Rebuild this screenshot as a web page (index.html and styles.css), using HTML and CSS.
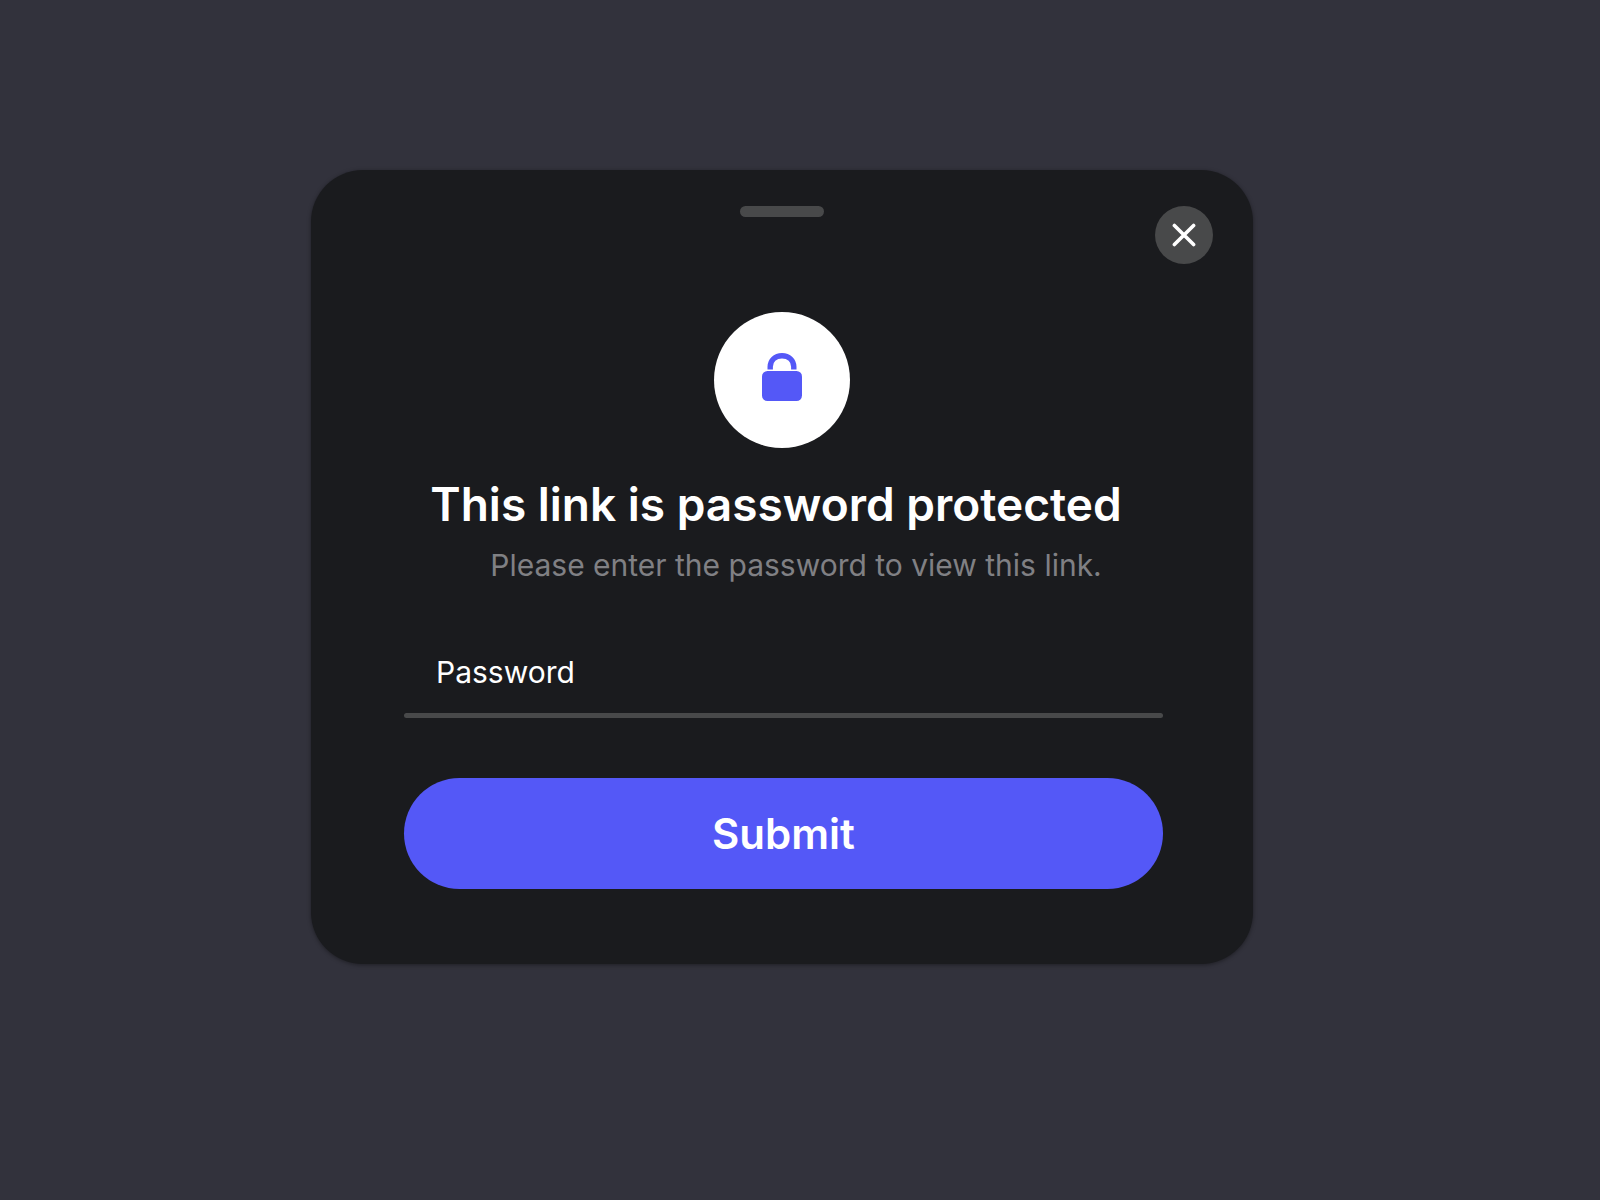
FILE: index.html
```
<!DOCTYPE html>
<html lang="en">
<head>
  <meta charset="UTF-8" />
  <meta name="viewport" content="width=device-width, initial-scale=1.0" />
  <title>Password protected link</title>
  <link rel="stylesheet" href="styles.css">
</head>
<body>
  <main class="modal">
    <div class="modal-top">
      <span class="handle"></span>
      <button type="button" class="close" aria-label="Close">
        <svg width="24" height="24" viewBox="0 0 24 24" fill="none" stroke="#fff" stroke-width="3.6" stroke-linecap="round">
          <path d="M2.4 2.4L21.6 21.6M21.6 2.4L2.4 21.6" />
        </svg>
      </button>
    </div>

    <div class="badge">
      <svg width="40" height="48" viewBox="0 0 40 48">
        <path d="M8.2 16.6V13.8C8.2 7.4 13 2.8 20 2.8S31.8 7.4 31.8 13.8V16.6" fill="none" stroke="#5458f7" stroke-width="5.4" />
        <rect x="0" y="18" width="40" height="30" rx="5.5" fill="#5458f7" />
      </svg>
    </div>

    <h1>This link is password protected</h1>
    <p class="subtitle">Please enter the password to view this link.</p>

    <form class="form">
      <div class="field">
        <input type="password" id="password" placeholder="Password" aria-label="Password" required />
        <span class="line"></span>
      </div>
      <button type="submit" class="submit">Submit</button>
    </form>
  </main>
</body>
</html>
```
FILE: styles.css
```
* {
  box-sizing: border-box;
}
body {
  margin: 0;
  padding: 170px 36px 40px 0;
  display: flex;
  justify-content: center;
  background: #32323c;
  font-family: Inter, "Liberation Sans", sans-serif;
  color: #fff;
}
.modal {
  width: 100%;
  max-width: 942px;
  padding: 36px 40px 75px;
  background: #1a1b1e;
  border-radius: 52px;
  box-shadow: 0 1px 4px rgba(0,0,0,0.4);
}
.modal-top {
  display: grid;
  grid-template-columns: 1fr auto 1fr;
  align-items: start;
}
.handle {
  grid-column: 2;
  width: 84px;
  height: 11px;
  background: #48494a;
  border-radius: 6px;
}
.close {
  justify-self: end;
  display: flex;
  align-items: center;
  justify-content: center;
  width: 58px;
  height: 58px;
  padding: 0;
  background: #48494a;
  border: none;
  border-radius: 50%;
}
.badge {
  display: flex;
  align-items: center;
  justify-content: center;
  width: 136px;
  height: 136px;
  margin: 48px auto 0;
  padding-bottom: 6px;
  background: #fff;
  border-radius: 50%;
}
h1 {
  margin: 28px 0 0;
  padding-right: 12px;
  font-size: 46px;
  font-weight: 600;
  line-height: 56px;
  text-align: center;
}
.subtitle {
  margin: 11px 0 0;
  padding-left: 28px;
  color: #808084;
  font-size: 30px;
  font-weight: 400;
  line-height: 44px;
  text-align: center;
}
.form {
  margin: 58px 50px 0 53px;
}
.field input {
  display: block;
  width: 100%;
  height: 54px;
  padding: 0 32px;
  background: none;
  border: none;
  outline: none;
  color: #fff;
  font-family: inherit;
  font-size: 30px;
  font-weight: 400;
}
.field input::placeholder {
  color: #fff;
  opacity: 1;
}
.line {
  display: block;
  height: 5px;
  margin-top: 14px;
  background: #48494a;
  border-radius: 3px;
}
.submit {
  width: 100%;
  height: 111px;
  margin-top: 60px;
  padding: 0;
  background: #5458f7;
  border: none;
  border-radius: 56px;
  color: #fff;
  font-family: inherit;
  font-size: 42px;
  font-weight: 600;
}
```
